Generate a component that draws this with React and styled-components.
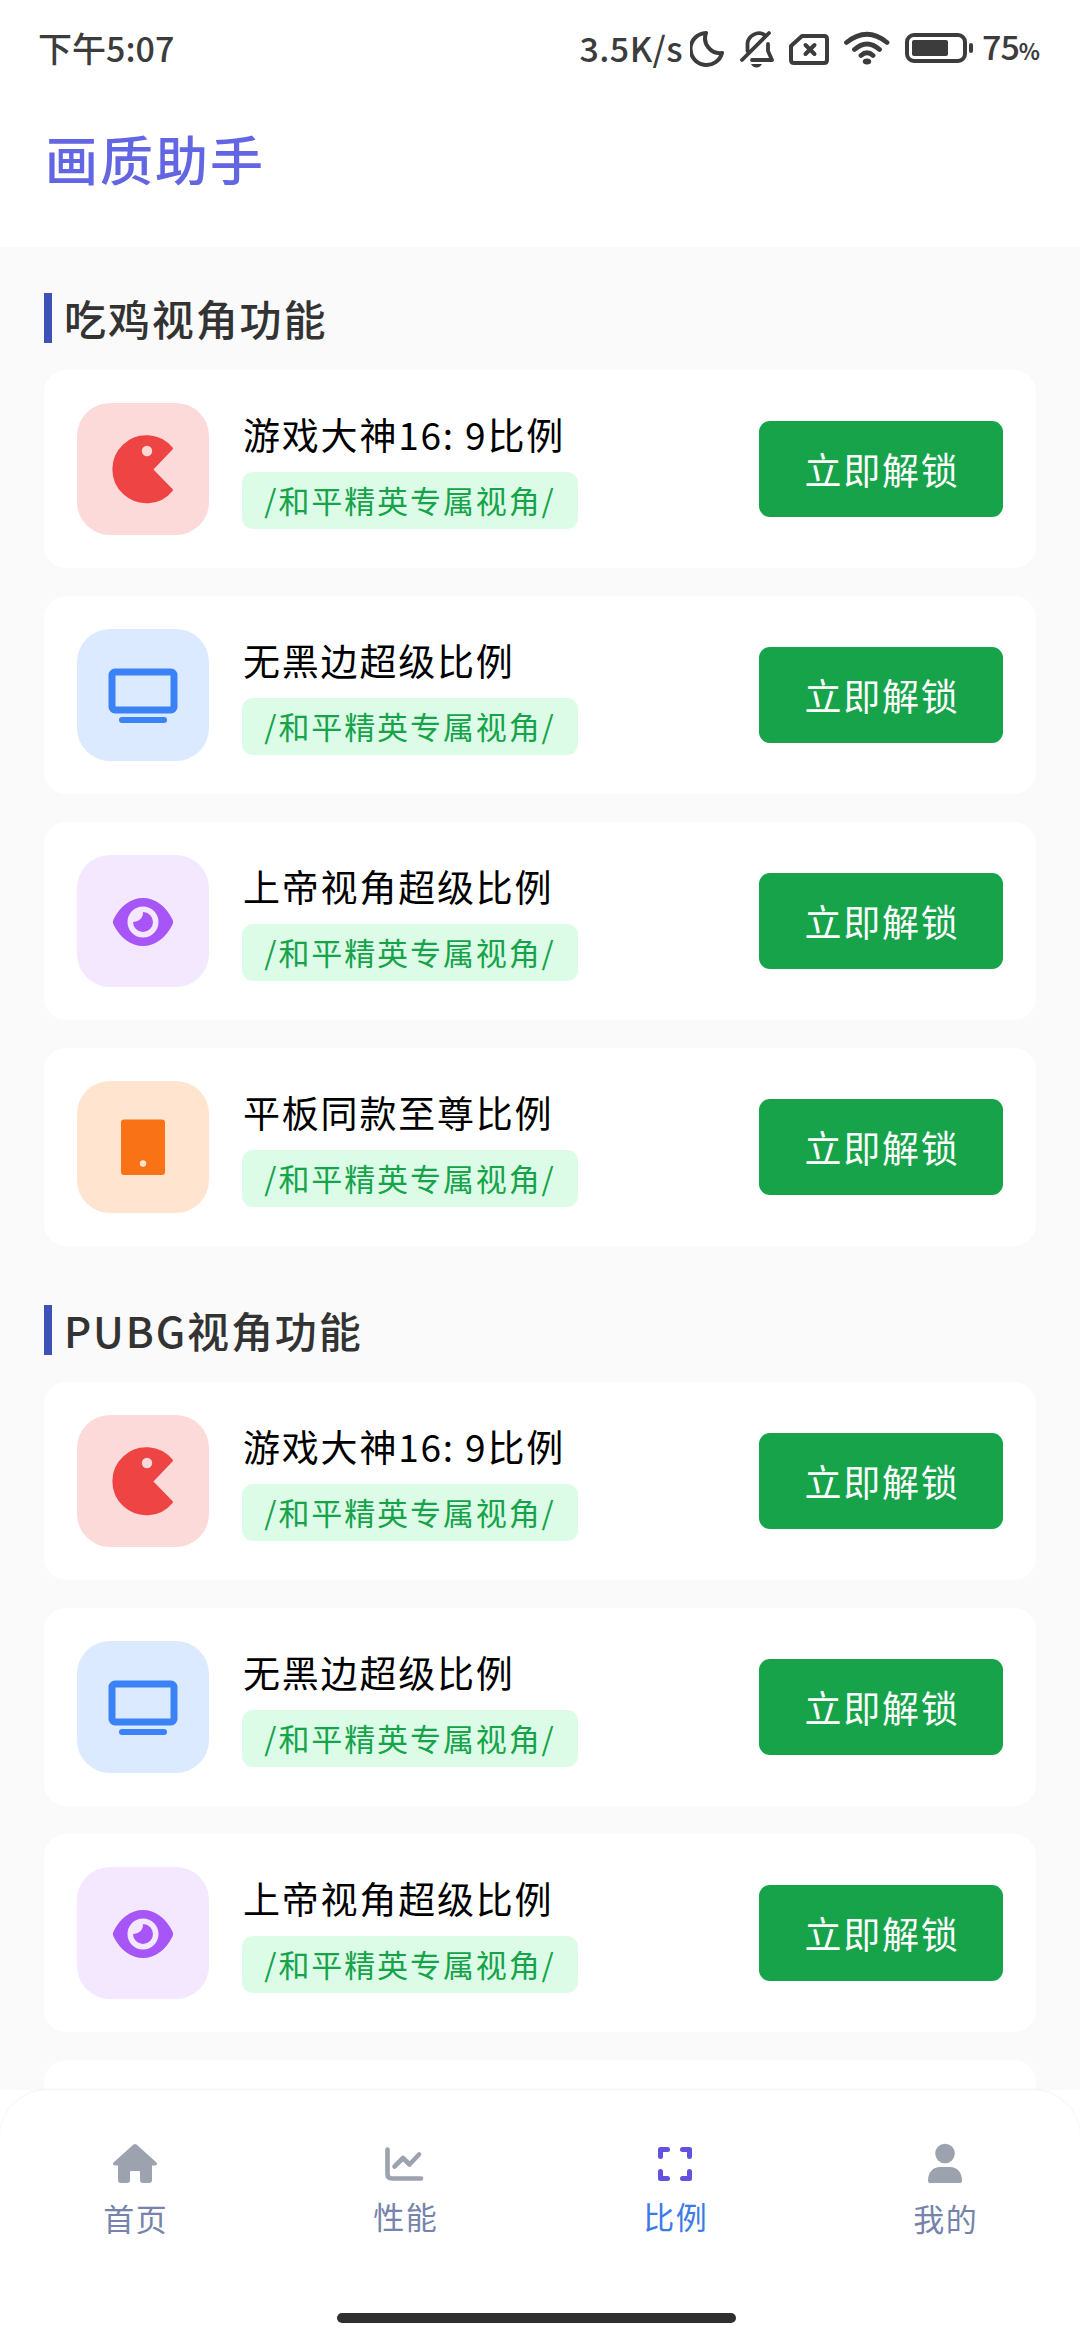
import styled, { createGlobalStyle } from "styled-components"

const GlobalStyle = createGlobalStyle`
    * {
        box-sizing: border-box;
    }
    body {
        margin: 0;
        background-color: #fafafa;
        font-family: "Noto Sans CJK SC", sans-serif;
    }
`;

const Container = styled.div`
    width: 1080px;
    height: 2340px;
    display: flex;
    flex-direction: column;
    overflow: hidden;
    background-color: #fafafa;
`;

const Header = styled.header`
    height: 247px;
    flex: none;
    background-color: white;
`;

const StatusBar = styled.div`
    height: 96px;
    padding: 0 40px 0 38px;
    display: flex;
    align-items: center;
    color: #3c3c3c;
    font-size: 34px;
    font-weight: 500;
    line-height: 50px;
`;

const Clock = styled.span`
    flex: 1;
`;

const Speed = styled.span`
    margin-right: 7px;
    letter-spacing: 0.4px;
`;

const StatusIcons = styled.svg`
    width: 292px;
    height: 50px;
    flex: none;
`;

const Battery = styled.span`
    width: 58px;
    display: flex;
    align-items: baseline;
    letter-spacing: -1px;
    small {
        font-size: 22px;
        font-weight: 700;
    }
`;

const AppTitle = styled.h1`
    margin: 22px 0 0 45px;
    font-size: 53px;
    line-height: 80px;
    font-weight: 500;
    letter-spacing: 2px;
    color: #6366e3;
`;

const Content = styled.main`
    flex: 1;
    min-height: 0;
    overflow: hidden;
    padding: 46px 44px 0;
`;

const Section = styled.section`
    margin-bottom: 59px;
`;

const SectionTitle = styled.h2`
    margin: 0 0 27px;
    height: 50px;
    padding-left: 12px;
    border-left: 8px solid #3f51b5;
    font-size: 42px;
    line-height: 50px;
    font-weight: 500;
    letter-spacing: 1.9px;
    color: #333;
`;

const CardList = styled.div`
    display: flex;
    flex-direction: column;
    gap: 28px;
`;

const Card = styled.div`
    height: 198px;
    padding: 0 33px;
    display: flex;
    align-items: center;
    background-color: white;
    border-radius: 22px;
`;

const Tile = styled.div`
    width: 132px;
    height: 132px;
    border-radius: 33px;
    margin-right: 33px;
    background-color: ${(props) => props.$bg};
    svg {
        display: block;
        width: 132px;
        height: 132px;
    }
`;

const Info = styled.div`
    flex: 1;
    display: flex;
    flex-direction: column;
    align-items: flex-start;
`;

const Name = styled.div`
    padding-left: 1px;
    font-size: 37px;
    line-height: 50px;
    letter-spacing: 1.8px;
    color: #000;
    white-space: pre;
`;

const Tag = styled.div`
    width: 336px;
    height: 57px;
    margin-top: 13px;
    border-radius: 11px;
    background-color: #dcfce7;
    color: #16a34a;
    font-size: 31px;
    line-height: 56px;
    letter-spacing: 1.9px;
    text-align: center;
`;

const Button = styled.button`
    width: 244px;
    height: 96px;
    border: none;
    border-radius: 11px;
    padding: 0 0 0 2px;
    background-color: #16a34a;
    color: white;
    font-family: inherit;
    font-size: 37px;
    letter-spacing: 1.8px;
`;

const Footer = styled.footer`
    height: 250px;
    flex: none;
    background-color: white;
`;

const Nav = styled.nav`
    height: 205px;
    display: grid;
    grid-template-columns: repeat(4, 1fr);
    border-radius: 48px 48px 0 0;
    box-shadow: 0 -1px 3px rgba(0, 0, 0, 0.05);
    background-color: white;
`;

const NavItem = styled.div`
    display: flex;
    flex-direction: column;
    align-items: center;
    padding-top: 46px;
    font-size: 31px;
    line-height: 44px;
    letter-spacing: 1.6px;
    text-indent: 1.6px;
    color: ${(props) => (props.$active ? "#3b7be8" : "#7683ac")};
    svg {
        width: 56px;
        height: 56px;
        margin-bottom: ${(props) => props.$gap}px;
    }
`;

const HomeIndicator = styled.div`
    width: 399px;
    height: 10px;
    border-radius: 5px;
    margin: 18px 0 0 337px;
    background-color: #2f2f2f;
`;

const PacmanIcon = () => (
  <svg viewBox="0 0 132 132">
    <path d="M95 45.500A33 33 0 1 0 95 87L75 66.500Z" fill="#ef4444" stroke="#ef4444" strokeWidth="2" strokeLinejoin="round" />
    <circle cx="70" cy="48" r="5.200" fill="#fcdada" />
  </svg>
)

const ScreenIcon = () => (
  <svg viewBox="0 0 132 132">
    <rect x="35" y="43" width="62" height="38" rx="3" fill="none" stroke="#3b82f6" strokeWidth="7" />
    <rect x="42" y="88" width="48" height="6" rx="3" fill="#3b82f6" />
  </svg>
)

const EyeIcon = () => (
  <svg viewBox="0 0 132 132">
    <path d="M36.500 64.500C43 51 54 43 66 43S89 51 95.500 64.500Q97 67 95.500 69.500C89 83 78 91 66 91S43 83 36.500 69.500Q35 67 36.500 64.500Z" fill="#a855f7" />
    <circle cx="66" cy="67" r="15.500" fill="#f3e8ff" />
    <path d="M66 57A10 10 0 1 1 56 67A9.500 9.500 0 0 0 66 57Z" fill="#a855f7" />
  </svg>
)

const TabletIcon = () => (
  <svg viewBox="0 0 132 132">
    <rect x="44" y="38.500" width="44" height="55.500" rx="3" fill="#f97316" />
    <circle cx="66" cy="82.500" r="3.200" fill="#ffe4cf" />
  </svg>
)

const HomeIcon = () => (
  <svg viewBox="0 0 56 56">
    <path d="M26.500 8.600Q28 7.200 29.500 8.600L49.500 26.500Q51 29.500 47.500 29.500H45V44Q45 47 42 47H36Q33 47 33 44V36Q33 35 32 35H24Q23 35 23 36V44Q23 47 20 47H14Q11 47 11 44V29.500H8.500Q5 29.500 6.500 26.500Z" fill="#9ca3af" />
  </svg>
)

const ChartIcon = () => (
  <svg viewBox="0 0 56 56" fill="none" stroke="#9ca3af" strokeWidth="4.600" strokeLinecap="round" strokeLinejoin="round">
    <path d="M10.500 13.500V38Q10.500 42.500 15 42.500H44" />
    <path d="M17.500 30.500L26 22L32.500 28.500L42 18.500" />
  </svg>
)

const FrameIcon = () => (
  <svg viewBox="0 0 56 56" fill="none" stroke="#6152e0" strokeWidth="5" strokeLinecap="round" strokeLinejoin="round">
    <path d="M13.500 20.500V13.500H20.500M35.500 13.500H42.500V20.500M42.500 35.500V42.500H35.500M20.500 42.500H13.500V35.500" />
  </svg>
)

const UserIcon = () => (
  <svg viewBox="0 0 56 56" fill="#9ca3af">
    <circle cx="28" cy="17.500" r="9.800" />
    <path d="M11 45C11 36 16 31 23 31H33C40 31 45 36 45 45Q45 47 43 47H13Q11 47 11 45Z" />
  </svg>
)

const features = [
  { name: "游戏大神16: 9比例", bg: "#fcdada", icon: <PacmanIcon /> },
  { name: "无黑边超级比例", bg: "#dbeafe", icon: <ScreenIcon /> },
  { name: "上帝视角超级比例", bg: "#f3e8ff", icon: <EyeIcon /> },
  { name: "平板同款至尊比例", bg: "#ffe4cf", icon: <TabletIcon /> },
]

const sections = [
  { title: "吃鸡视角功能", items: features },
  { title: "PUBG视角功能", items: features.slice(0, 3), more: true },
]

const tabs = [
  { label: "首页", icon: <HomeIcon />, gap: 4 },
  { label: "性能", icon: <ChartIcon />, gap: 2 },
  { label: "比例", icon: <FrameIcon />, gap: 2, active: true },
  { label: "我的", icon: <UserIcon />, gap: 4 },
]

const App = () => {
  return (
    <Container>
      <GlobalStyle />
      <Header>
        <StatusBar>
          <Clock>下午5:07</Clock>
          <Speed>3.5K/s</Speed>
          <StatusIcons viewBox="688 23 292 50" fill="none" stroke="#3c3c3c" strokeWidth="4" strokeLinecap="round" strokeLinejoin="round">
            <path d="M704 33A16 16 0 1 0 720 53A15 15 0 0 1 704 33Z" />
            <path d="M740 60L767 33M745.500 51V43A11.500 11.500 0 0 1 762 34.500M766 44V51L770 60H750" strokeWidth="3.800" />
            <path d="M749 64H760Q758 67.500 754.500 67.500T749 64Z" fill="#3c3c3c" stroke="none" />
            <path d="M800 36H822Q825 36 825 39V60Q825 63 822 63H792Q789 63 789 60V46Z" />
            <path d="M803.500 45L812.500 54M812.500 45L803.500 54" />
            <path d="M844.500 42.500Q865 26 885 42.500M852.500 49.500Q865 38.500 877.500 49.500M859 55.500Q865 50 871 55.500" strokeWidth="4.800" />
            <ellipse cx="865" cy="61.500" rx="4.200" ry="3" fill="#3c3c3c" stroke="none" />
            <rect x="905" y="35" width="58" height="26" rx="7" />
            <rect x="910" y="40" width="36" height="16" rx="2" fill="#3c3c3c" stroke="none" />
            <path d="M969 45V51" />
          </StatusIcons>
          <Battery>75<small>%</small></Battery>
        </StatusBar>
        <AppTitle>画质助手</AppTitle>
      </Header>
      <Content>
        {sections.map((section) => (
          <Section key={section.title}>
            <SectionTitle>{section.title}</SectionTitle>
            <CardList>
              {section.items.map((item) => (
                <Card key={item.name}>
                  <Tile $bg={item.bg}>{item.icon}</Tile>
                  <Info>
                    <Name>{item.name}</Name>
                    <Tag>/和平精英专属视角/</Tag>
                  </Info>
                  <Button>立即解锁</Button>
                </Card>
              ))}
              {/* only the top edge peeks out above the nav */}
              {section.more && <Card />}
            </CardList>
          </Section>
        ))}
      </Content>
      <Footer>
        <Nav>
          {tabs.map((tab) => (
            <NavItem key={tab.label} $active={tab.active} $gap={tab.gap}>
              {tab.icon}
              {tab.label}
            </NavItem>
          ))}
        </Nav>
        <HomeIndicator />
      </Footer>
    </Container>
  )
}

export default App
